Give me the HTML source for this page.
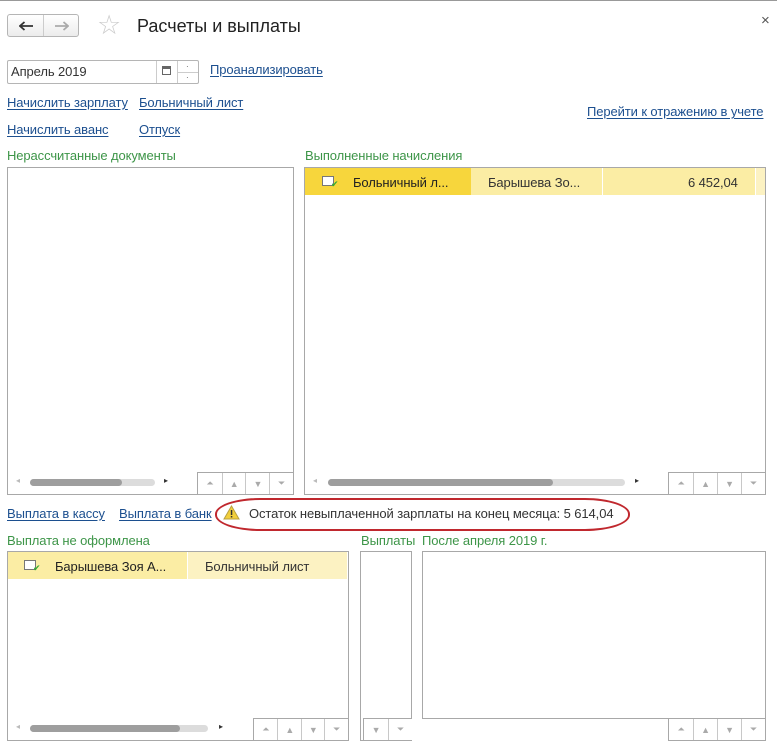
<!DOCTYPE html>
<html><head><meta charset="utf-8"><style>
*{margin:0;padding:0;box-sizing:border-box}
body{width:777px;height:747px;background:#fff;font-family:"Liberation Sans",Arial,sans-serif;font-size:13px;letter-spacing:-0.1px;color:#333;position:relative;overflow:hidden}
.a{position:absolute;white-space:nowrap}
.lnk{color:#1c4f8f;text-decoration:underline;text-underline-offset:2px}
.grn{color:#3d9548}
.box{position:absolute;border:1px solid #a8a8a8;background:#fff}
.btns{position:absolute;display:flex;border:1px solid #a8a8a8;height:23px;background:#fff}
.btns div{width:24px;border-left:1px solid #c8c8c8;display:flex;align-items:center;justify-content:center;color:#aaa;font-size:9px}
.btns div:first-child{border-left:none}
.sb{position:absolute;height:7px;border-radius:4px;background:#dcdcdc}
.sb i{position:absolute;left:0;top:0;height:7px;border-radius:4px;background:#9e9e9e}
</style></head><body>
<div class="a" style="left:0;top:0;width:777px;height:1px;background:#999"></div>
<div class="a" style="left:7px;top:14px;width:72px;height:23px;border:1px solid #b5b5b5;border-radius:3px;background:linear-gradient(#fff,#ececec)"></div>
<div class="a" style="left:43px;top:15px;width:1px;height:21px;background:#ccc"></div>
<svg class="a" style="left:19px;top:21px" width="15" height="10"><path d="M1 5H14M5.5 1L1 5L5.5 9" stroke="#333" stroke-width="1.8" fill="none"/></svg>
<svg class="a" style="left:54px;top:21px" width="15" height="10"><path d="M1 5H14M9.5 1L14 5L9.5 9" stroke="#aaa" stroke-width="1.8" fill="none"/></svg>
<div class="a" style="left:97px;top:10px;font-size:27px;color:#ccc">&#9734;</div>
<div class="a" style="left:137px;top:16px;font-size:18px;color:#222;letter-spacing:0">Расчеты и выплаты</div>
<div class="a" style="left:761px;top:12px;font-size:15px;color:#555">×</div>

<div class="a" style="left:7px;top:60px;width:192px;height:24px;border:1px solid #b5b5b5;border-radius:2px"></div>
<div class="a" style="left:156px;top:61px;width:1px;height:22px;background:#ccc"></div>
<div class="a" style="left:177px;top:61px;width:1px;height:22px;background:#ccc"></div>
<div class="a" style="left:178px;top:72px;width:20px;height:1px;background:#ccc"></div>
<div class="a" style="left:162px;top:66px;width:9px;height:9px;border:1px solid #666;border-top-width:3px"></div>
<div class="a" style="left:186px;top:62px;font-size:8px;color:#555">·</div>
<div class="a" style="left:186px;top:73px;font-size:8px;color:#555">·</div>
<div class="a" style="left:11px;top:64px;color:#333">Апрель 2019</div>
<div class="a lnk" style="left:210px;top:62px">Проанализировать</div>

<div class="a lnk" style="left:7px;top:95px">Начислить зарплату</div>
<div class="a lnk" style="left:139px;top:95px">Больничный лист</div>
<div class="a lnk" style="left:7px;top:122px">Начислить аванс</div>
<div class="a lnk" style="left:139px;top:122px">Отпуск</div>
<div class="a lnk" style="left:587px;top:104px">Перейти к отражению в учете</div>

<div class="a grn" style="left:7px;top:148px">Нерассчитанные документы</div>
<div class="a grn" style="left:305px;top:148px">Выполненные начисления</div>

<div class="box" style="left:7px;top:167px;width:287px;height:328px"></div>
<div class="a" style="left:16px;top:476px;font-size:8px;color:#bbb">◂</div>
<div class="sb" style="left:30px;top:479px;width:125px"><i style="width:92px"></i></div>
<div class="a" style="left:164px;top:476px;font-size:8px;color:#333">▸</div>
<div class="btns" style="left:197px;top:472px;width:97px"><div>⏶</div><div>▲</div><div>▼</div><div>⏷</div></div>

<div class="box" style="left:304px;top:167px;width:462px;height:328px"></div>
<div class="a" style="left:305px;top:168px;width:166px;height:27px;background:#f7d63c"></div>
<div class="a" style="left:471px;top:168px;width:131px;height:27px;background:#fbeda4"></div>
<div class="a" style="left:602px;top:168px;width:153px;height:27px;background:#fbeda4;border-left:1px solid #fff"></div>
<div class="a" style="left:755px;top:168px;width:10px;height:27px;background:#fcf2c2;border-left:1px solid #fff"></div>
<div class="a" style="left:322px;top:176px;width:12px;height:10px;border:1px solid #777;background:#fff"></div>
<div class="a" style="left:331px;top:181px;width:7px;height:6px;color:#3a3;font-size:9px;line-height:6px">✔</div>
<div class="a" style="left:353px;top:175px;color:#222">Больничный л...</div>
<div class="a" style="left:488px;top:175px;color:#333">Барышева Зо...</div>
<div class="a" style="left:688px;top:175px;color:#333">6 452,04</div>
<div class="a" style="left:313px;top:476px;font-size:8px;color:#bbb">◂</div>
<div class="sb" style="left:328px;top:479px;width:297px"><i style="width:225px"></i></div>
<div class="a" style="left:635px;top:476px;font-size:8px;color:#333">▸</div>
<div class="btns" style="left:668px;top:472px;width:98px"><div>⏶</div><div>▲</div><div>▼</div><div>⏷</div></div>

<div class="a lnk" style="left:7px;top:506px">Выплата в кассу</div>
<div class="a lnk" style="left:119px;top:506px">Выплата в банк</div>
<div class="a" style="left:215px;top:498px;width:415px;height:33px;border:2px solid #c0282e;border-radius:45px/16px"></div>
<svg class="a" style="left:223px;top:505px" width="17" height="15"><path d="M8.5 1 L16 14 H1 Z" fill="#f2cf3c" stroke="#b8a040"/><rect x="7.8" y="5" width="1.5" height="5" fill="#333"/><rect x="7.8" y="11" width="1.5" height="1.5" fill="#333"/></svg>
<div class="a" style="left:249px;top:506px;color:#333">Остаток невыплаченной зарплаты на конец месяца: 5 614,04</div>

<div class="a grn" style="left:7px;top:533px">Выплата не оформлена</div>
<div class="a grn" style="left:361px;top:533px">Выплаты</div>
<div class="a grn" style="left:422px;top:533px">После апреля 2019 г.</div>

<div class="box" style="left:7px;top:551px;width:342px;height:190px"></div>
<div class="a" style="left:8px;top:552px;width:179px;height:27px;background:#fbeda4"></div>
<div class="a" style="left:187px;top:552px;width:160px;height:27px;background:#fcf2c2;border-left:1px solid #fff"></div>
<div class="a" style="left:24px;top:560px;width:12px;height:10px;border:1px solid #777;background:#fff"></div>
<div class="a" style="left:33px;top:565px;color:#3a3;font-size:9px;line-height:6px">✔</div>
<div class="a" style="left:55px;top:559px;color:#222">Барышева Зоя А...</div>
<div class="a" style="left:205px;top:559px;color:#333">Больничный лист</div>
<div class="a" style="left:16px;top:722px;font-size:8px;color:#bbb">◂</div>
<div class="sb" style="left:30px;top:725px;width:178px"><i style="width:150px"></i></div>
<div class="a" style="left:219px;top:722px;font-size:8px;color:#333">▸</div>
<div class="btns" style="left:253px;top:718px;width:96px"><div>⏶</div><div>▲</div><div>▼</div><div>⏷</div></div>

<div class="box" style="left:360px;top:551px;width:52px;height:190px"></div>
<div class="btns" style="left:363px;top:718px;width:49px;border-right:none"><div>▼</div><div>⏷</div></div>

<div class="box" style="left:422px;top:551px;width:344px;height:168px"></div>
<div class="btns" style="left:668px;top:718px;width:98px"><div>⏶</div><div>▲</div><div>▼</div><div>⏷</div></div>
</body></html>
